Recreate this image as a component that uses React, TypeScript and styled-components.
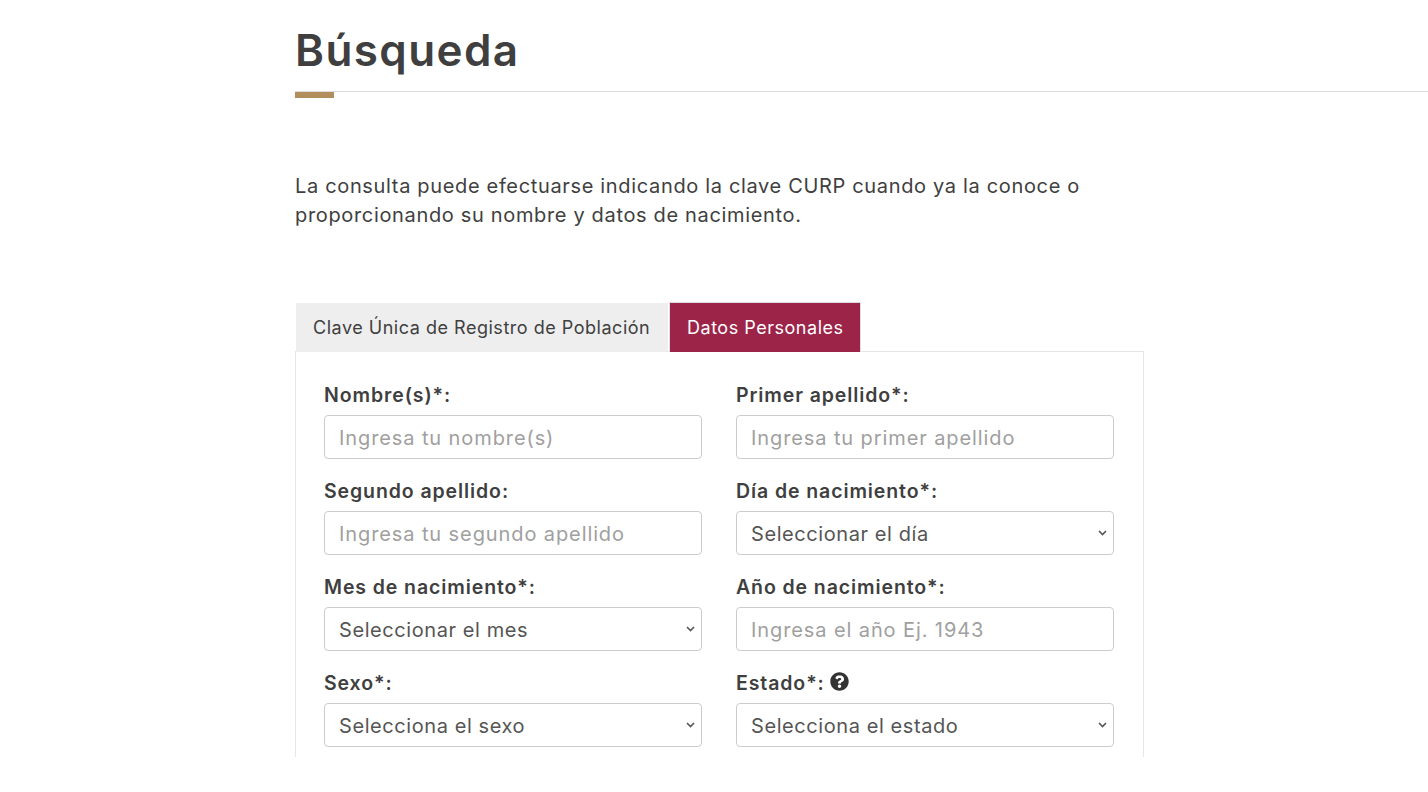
import React from 'react';
import styled, { createGlobalStyle } from 'styled-components';

const GlobalStyle = createGlobalStyle`
  html, body {
    margin: 0;
    padding: 0;
    background: #fff;
    overflow: hidden;
  }
  * {
    box-sizing: border-box;
  }
`;

const fontStack = `Inter, "Open Sans", "Liberation Sans", sans-serif`;

const chevron = `url("data:image/svg+xml,%3Csvg xmlns='http://www.w3.org/2000/svg' width='9' height='6' viewBox='0 0 9 6'%3E%3Cpath d='M1 1l3.500 3.500L8 1' fill='none' stroke='%23555' stroke-width='1.600'/%3E%3C/svg%3E")`;

type FieldDef = {
  label: string,
  placeholder: string,
  kind: 'input' | 'select',
  help?: boolean,
};

const fields: FieldDef[] = [
  { label: 'Nombre(s)*:', placeholder: 'Ingresa tu nombre(s)', kind: 'input' },
  { label: 'Primer apellido*:', placeholder: 'Ingresa tu primer apellido', kind: 'input' },
  { label: 'Segundo apellido:', placeholder: 'Ingresa tu segundo apellido', kind: 'input' },
  { label: 'Día de nacimiento*:', placeholder: 'Seleccionar el día', kind: 'select' },
  { label: 'Mes de nacimiento*:', placeholder: 'Seleccionar el mes', kind: 'select' },
  { label: 'Año de nacimiento*:', placeholder: 'Ingresa el año Ej. 1943', kind: 'input' },
  { label: 'Sexo*:', placeholder: 'Selecciona el sexo', kind: 'select' },
  { label: 'Estado*:', placeholder: 'Selecciona el estado', kind: 'select', help: true },
];

const HelpIcon = () => (
  <HelpSvg viewBox="0 0 512 512" aria-hidden="true">
    <path
      fill="currentColor"
      d="M504 256c0 137-111 248-248 248S8 393 8 256 119 8 256 8s248 111 248 248zM262.700 90c-54.500 0-89.300 23-116.500 63.800-3.500 5.300-2.400 12.400 2.700 16.300l34.700 26.300c5.200 3.900 12.600 3 16.700-2.100 17.900-22.700 30.100-35.800 57.300-35.800 20.400 0 45.700 13.100 45.700 32.900 0 15-12.400 22.700-32.600 34-23.600 13.200-54.800 29.700-54.800 70.900V300c0 6.600 5.400 12 12 12h56c6.600 0 12-5.400 12-12v-1.300c0-28.600 83.500-29.800 83.500-107.200 0-58.300-60.500-102.500-117.200-102.500zM256 339c-25.500 0-46.200 20.700-46.200 46.200 0 25.500 20.700 46.200 46.200 46.200s46.200-20.700 46.200-46.200c0-25.500-20.700-46.200-46.200-46.200z"
    />
  </HelpSvg>
);

const App: React.FC = () => {
  return (
    <Page>
      <GlobalStyle />
      <Content>
        <Title>Búsqueda</Title>
        <Divider />
        <Intro>
          La consulta puede efectuarse indicando la clave CURP cuando ya la conoce o
          <br />
          proporcionando su nombre y datos de nacimiento.
        </Intro>
        <Tabs>
          <Tab>Clave Única de Registro de Población</Tab>
          <Tab $active>Datos Personales</Tab>
        </Tabs>
        <Panel>
          <FormGrid>
            {fields.map((field) => (
              <Field key={field.label}>
                <Label>
                  {field.label}
                  {field.help && <HelpIcon />}
                </Label>
                {field.kind === 'input' ? (
                  <TextInput type="text" placeholder={field.placeholder} />
                ) : (
                  <Select defaultValue="">
                    <option value="">{field.placeholder}</option>
                  </Select>
                )}
              </Field>
            ))}
          </FormGrid>
        </Panel>
      </Content>
    </Page>
  );
};

export default App;

const Page = styled.div`
  height: 757px;
  overflow: hidden;
  background: #fff;
  font-family: ${fontStack};
  color: #3f3f3f;
`;

const Content = styled.main`
  margin-left: 295px;
`;

const Title = styled.h1`
  margin: 0;
  padding-top: 24px;
  height: 91px;
  font-size: 44px;
  line-height: 52px;
  font-weight: 600;
  color: #3f3f3f;
  letter-spacing: 1.4px;
`;

const Divider = styled.div`
  height: 1px;
  background: #dcdcdc;
  position: relative;

  &::after {
    content: '';
    position: absolute;
    left: 0;
    top: 1px;
    width: 39px;
    height: 6px;
    background: #b38e5d;
  }
`;

const Intro = styled.p`
  margin: 80px 0 0;
  height: 130px;
  font-size: 20px;
  line-height: 29px;
  font-weight: 400;
  color: #404040;
  letter-spacing: 0.66px;
`;

const Tabs = styled.div`
  display: flex;
  height: 50px;
  padding-left: 1px;
`;

const Tab = styled.div<{ $active?: boolean }>`
  position: relative;
  display: flex;
  align-items: center;
  height: 50px;
  width: ${(p) => (p.$active ? '192px' : '372px')};
  margin-left: ${(p) => (p.$active ? '1px' : '0')};
  padding-left: 17px;
  font-size: 18px;
  letter-spacing: 0.52px;
  white-space: nowrap;
  background: ${(p) => (p.$active ? '#9d2449' : '#eeeeee')};
  background-clip: padding-box;
  color: ${(p) => (p.$active ? '#ffffff' : '#404040')};
  border: ${(p) => (p.$active ? '1px solid #dddddd' : 'none')};
  border-top: 1px solid ${(p) => (p.$active ? '#dddddd' : 'transparent')};
  border-bottom: none;
`;

const Panel = styled.section`
  width: 849px;
  height: 600px;
  margin-top: -1px;
  padding: 28px 28px 0;
  border: 1px solid #e6e6e6;
  background: #fff;
`;

const FormGrid = styled.div`
  display: grid;
  grid-template-columns: 378px 378px;
  column-gap: 34px;
  row-gap: 8px;
`;

const Field = styled.div`
  display: flex;
  flex-direction: column;
  height: 88px;
`;

const Label = styled.label`
  display: flex;
  align-items: center;
  gap: 5px;
  height: 29px;
  margin-bottom: 6px;
  font-size: 19.5px;
  font-weight: 600;
  letter-spacing: 0.9px;
  color: #3f3f3f;
`;

const HelpSvg = styled.svg`
  width: 19px;
  height: 19px;
  margin-top: -3px;
  color: #333333;
`;

const TextInput = styled.input`
  width: 378px;
  height: 44px;
  padding: 2px 14px 0;
  border: 1px solid #ccc;
  border-radius: 4px;
  font-family: ${fontStack};
  font-size: 20px;
  letter-spacing: 0.9px;
  color: #555;
  background: #fff;
  outline: none;

  &::placeholder {
    color: #a0a0a0;
    opacity: 1;
  }
`;

const Select = styled.select`
  width: 378px;
  height: 44px;
  padding: 2px 14px 0;
  border: 1px solid #ccc;
  border-radius: 4px;
  font-family: ${fontStack};
  font-size: 20px;
  letter-spacing: 0.58px;
  color: #555;
  appearance: none;
  background: #fff ${chevron} no-repeat right 6px center;
  outline: none;
`;
